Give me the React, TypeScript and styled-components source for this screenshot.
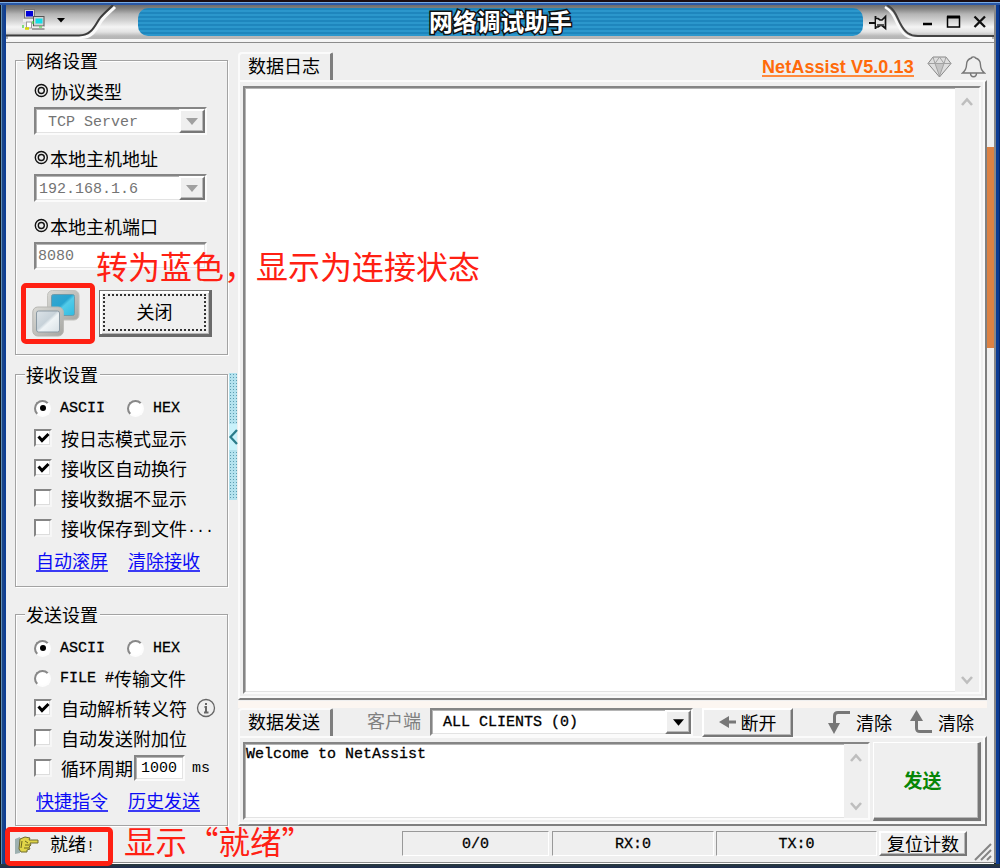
import React from "react";
import styled, { createGlobalStyle, css } from "styled-components";

const cjk = `"Noto Sans CJK SC", "Noto Sans", sans-serif`;
const mono = `"Liberation Mono", "Noto Sans CJK SC", monospace`;

const Global = createGlobalStyle`
  * { box-sizing: border-box; }
  body { margin: 0; font-family: ${cjk}; font-size: 18px; line-height: 20px; color: #000; white-space: nowrap; }
  svg { display: block; flex: none; }
  button, input { font: inherit; color: inherit; border-radius: 0; margin: 0; }
`;

const Frame = styled.div`
  position: relative;
  width: 1000px;
  height: 868px;
  padding: 5px 4px 5px 6px;
  display: flex;
  flex-direction: column;
  overflow: hidden;
  background:
    linear-gradient(#1a0c10 0 2px, #79abe4 2px 3px, #2a57a4 3px 5px, transparent 5px) 0 0 / 100% 100%,
    linear-gradient(#2b3b3b, #1d2c50) 0 100% / 100% 4px no-repeat,
    linear-gradient(90deg, #101418 0 1px, #5e8fb8 1px 2px, #1b4488 2px 4px, #0f3f94 4px 6px, transparent 6px calc(100% - 6px), #14202c calc(100% - 6px) calc(100% - 4px), #0c3c94 calc(100% - 4px) calc(100% - 1px), #07276a calc(100% - 1px));
`;

const Shell = styled.div`
  flex: 1;
  display: flex;
  flex-direction: column;
  background: #efefef;
  border-right: 2px solid #87888a;
`;

const TitleBar = styled.header`
  height: 38px;
  display: grid;
  grid-template-columns: 132px 725px 1fr;
  background: linear-gradient(#6c6b6b 0, #858585 4px, #b4b4b4 9px, #cfcfcf 15px, #f4f4f4 22px, #e2e2e2 27px, #b9b9b9 31px, #b5b5b5 34px, #f7f7f7 34px, #f4f4f4 37px, #8c8c8c 37px);
`;

const TitlePill = styled.h1`
  margin: 3px 0 0;
  height: 28px;
  padding-bottom: 3px;
  border-radius: 10px;
  display: flex;
  align-items: center;
  justify-content: center;
  font-size: 23.8px;
  font-weight: 700;
  color: #fff;
  -webkit-text-stroke: 3px #111;
  paint-order: stroke fill;
  background: repeating-linear-gradient(#1e86bd 0 2px, #2b97cc 2px 4px);
`;

const Main = styled.main`
  height: 785px;
  display: flex;
`;

const Sidebar = styled.aside`
  width: 222px;
  padding: 17px 0 0 9px;
`;

const Group = styled.section<{ $h: number; $gap?: number }>`
  height: ${(p) => p.$h}px;
  margin-top: ${(p) => p.$gap ?? 0}px;
  padding-left: 18px;
  border: 1px solid #a3a3a3;
  box-shadow: 1px 1px 0 #fff, inset 1px 1px 0 #fff;
`;

const Legend = styled.h2`
  width: 75px;
  height: 20px;
  margin: -10px 0 0 -9px;
  padding-left: 1px;
  background: #efefef;
  font-size: 18px;
  line-height: 18px;
  font-weight: 400;
`;

const Label = styled.div<{ $mt: number }>`
  margin-top: ${(p) => p.$mt}px;
  height: 20px;
  line-height: 18px;
  display: flex;
  gap: 1px;
`;

const sunken = css`
  background: #fff;
  border: 2px solid;
  border-color: #858585 #fbfbfb #fbfbfb #858585;
  box-shadow: inset 1px 1px 0 #b5b5b5, inset -1px -1px 0 #e3e3e3;
`;

const raised = css`
  background: #efefef;
  border: 2px solid;
  border-color: #fff #777 #777 #fff;
  box-shadow: inset -1px -1px 0 #b8b8b8;
`;

const Combo = styled.div<{ $w: number; $pad: number; $live?: boolean }>`
  ${sunken}
  width: ${(p) => p.$w}px;
  height: 28px;
  margin-top: 5px;
  padding-left: ${(p) => p.$pad}px;
  display: flex;
  justify-content: space-between;
  font: 15px/27px ${mono};
  color: ${(p) => (p.$live ? "#000" : "#747474")};
`;

const DropButton = styled.span`
  ${raised}
  width: 26px;
  height: 24px;
  display: grid;
  place-items: center;
`;

const PortField = styled.input`
  ${sunken}
  width: 173px;
  height: 28px;
  margin-top: 5px;
  padding: 0 2px;
  display: block;
  font: 15px/20px ${mono};
  color: #747474;
  outline: none;
`;

const ConnectRow = styled.div`
  display: flex;
  align-items: center;
  margin: 19px 0 0 -2px;
  height: 48px;
`;

const ConnectButton = styled.button`
  ${raised}
  width: 113px;
  height: 47px;
  margin-left: 18px;
  padding: 3px;
  border-color: #777 #6a6a6a #6a6a6a #777;
  border-width: 1px 3px 3px 1px;
  box-shadow: inset 2px 2px 0 #fff, inset -1px -1px 0 #b8b8b8;
  & > span {
    height: 100%;
    display: grid;
    place-items: center;
    border: 2px dotted #333;
    padding-bottom: 2px;
  }
`;

const Options = styled.div`
  padding-top: 8px;
`;

const OptionRow = styled.div`
  height: 30px;
  display: flex;
  align-items: center;
`;

const Latin = styled.span<{ $bold?: boolean; $drop?: number }>`
  font: 15px/20px ${mono};
  padding-top: ${(p) => p.$drop ?? 2}px;
  ${(p) => p.$bold && "-webkit-text-stroke: 0.3px currentColor;"}
`;

const CheckBox = styled.span`
  width: 18px;
  height: 18px;
  margin-right: 9px;
  display: grid;
  place-items: center;
  background: #fff;
  border: 2px solid;
  border-color: #858585 #f6f6f6 #f6f6f6 #858585;
  box-shadow: inset -1px -1px 0 #ddd;
`;

const RadioDot = styled.span<{ $on?: boolean; $ml?: number }>`
  width: 17px;
  height: 17px;
  margin: 0 9px 0 ${(p) => p.$ml ?? 0}px;
  border-radius: 50%;
  display: grid;
  place-items: center;
  border: 2px solid;
  border-color: #888 #fdfdfd #fdfdfd #888;
  background: #fff;
  &::after {
    content: "";
    width: 6px;
    height: 6px;
    border-radius: 50%;
    background: ${(p) => (p.$on ? "#000" : "transparent")};
  }
`;

const PeriodField = styled.input`
  ${sunken}
  width: 51px;
  height: 26px;
  padding: 1px 0 0 5px;
  margin: 0 7px 0 1px;
  font: 15px/20px ${mono};
  outline: none;
`;

const Links = styled.nav`
  margin: 7px 0 0 2px;
  display: flex;
  gap: 20px;
`;

const Link = styled.a`
  height: 22px;
  line-height: 21px;
  color: #0b0bf5;
  border-bottom: 2px solid #3a3af5;
`;

const Splitter = styled.div`
  width: 10px;
  padding: 330px 0 0 1px;
`;

const Grip = styled.div`
  height: 127px;
  width: 8px;
  padding-top: 51px;
  background: radial-gradient(circle, #5c9cb0 0.7px, transparent 1px) 0 0 / 3px 3px, #b4e2ee;
  & > div {
    height: 26px;
    display: grid;
    place-items: center;
    background: #c9f2fb;
  }
`;

const Content = styled.div`
  width: 749px;
  padding-top: 9px;
`;

const TabRow = styled.div`
  height: 28px;
  display: flex;
  align-items: center;
`;

const Tab = styled.div`
  width: 95px;
  height: 28px;
  align-self: flex-start;
  padding: 1px 0 0 8px;
  border: solid;
  border-width: 2px 3px 0 2px;
  border-color: #fbfbfb #7e7e7e #fbfbfb #fbfbfb;
  border-radius: 4px 2px 0 0;
`;

const VersionLink = styled.a`
  margin: 2px 0 0 429px;
  height: 19px;
  font: 700 18px/18px "Liberation Sans", sans-serif;
  letter-spacing: 0.1px;
  color: #ff6a0a;
  border-bottom: 2px solid #ff8a3c;
`;

const IconPair = styled.div`
  display: flex;
  gap: 9px;
  margin: 2px 0 0 13px;
`;

const Panel = styled.div<{ $h: number }>`
  height: ${(p) => p.$h}px;
  display: flex;
  gap: 3px;
  padding: 4px 4px 4px 3px;
  border: 2px solid;
  border-color: #fbfbfb #808080 #808080 #fbfbfb;
  box-shadow: inset -2px -2px 0 #fafafa;
`;

const TextArea = styled.div<{ $w: number }>`
  ${sunken}
  width: ${(p) => p.$w}px;
  display: flex;
  justify-content: space-between;
`;

const Message = styled.div`
  padding-left: 1px;
  line-height: 20px;
  display: flex;
  align-items: flex-start;
`;

const ScrollTrack = styled.div`
  width: 24px;
  padding: 9px 0 7px;
  display: flex;
  flex-direction: column;
  align-items: center;
  justify-content: space-between;
  background: #efefef;
`;

const SendRow = styled.div`
  margin-top: 1px;
  border-top: 7px solid #fcf6f1;
  height: 35px;
  display: flex;
`;

const ClientLabel = styled.span`
  margin: 2px 9px 0 34px;
  color: #808080;
`;

const SendCombo = styled(Combo)`
  margin-top: 0;
`;

const FlatButton = styled.button<{ $w: number; $h: number; $ml?: number }>`
  ${raised}
  width: ${(p) => p.$w}px;
  height: ${(p) => p.$h}px;
  margin-left: ${(p) => p.$ml ?? 0}px;
  padding: 0 0 2px;
  display: flex;
  align-items: center;
  justify-content: center;
  gap: 5px;
`;

const ClearAction = styled.span<{ $ml: number }>`
  margin: 1px 0 0 ${(p) => p.$ml}px;
  height: 26px;
  display: flex;
  align-items: center;
  gap: 5px;
  & > span { padding-bottom: 1px; }
`;

const SendButton = styled.button`
  ${raised}
  width: 108px;
  height: 79px;
  padding: 0 7px 2px 0;
  border-width: 1px 3px 3px 1px;
  font-size: 19px;
  font-weight: 700;
  color: #078607;
`;

const StatusBar = styled.footer`
  height: 35px;
  padding: 3px 0 0 9px;
  display: flex;
  align-items: flex-start;
  border-bottom: 1px solid #8c8c8c;
`;

const Ready = styled.div`
  width: 387px;
  height: 28px;
  display: flex;
  align-items: center;
  gap: 11px;
`;

const StatusCell = styled.div<{ $w: number; $gap: number }>`
  width: ${(p) => p.$w}px;
  height: 25px;
  margin-right: ${(p) => p.$gap}px;
  display: grid;
  place-items: center;
  border: 1px solid;
  border-color: #999 #fff #fff #999;
`;

const Highlight = styled.div<{ $x: number; $y: number; $w: number; $h: number }>`
  position: absolute;
  left: ${(p) => p.$x}px;
  top: ${(p) => p.$y}px;
  width: ${(p) => p.$w}px;
  height: ${(p) => p.$h}px;
  border: 5px solid #ff2013;
  border-radius: 5px;
`;

const Note = styled.div<{ $x: number; $y: number; $size: number }>`
  position: absolute;
  left: ${(p) => p.$x}px;
  top: ${(p) => p.$y}px;
  font: 400 ${(p) => p.$size}px/30px "Noto Sans CJK SC", sans-serif;
  color: #ff2013;
`;

const EdgeMarker = styled.div`
  position: absolute;
  left: 987px;
  top: 147px;
  width: 7px;
  height: 201px;
  background: #dc8244;
`;

const InfoIcon = styled.svg`
  margin-left: 9px;
`;

const SizeGrip = styled.svg`
  margin: 11px 0 0 7px;
`;

const Triangle = ({ color = "#a0a0a0", w = 12 }: { color?: string; w?: number }) => (
  <svg width={w} height="7" viewBox="0 0 12 7"><path d="M0 0H12L6 7Z" fill={color} /></svg>
);

const Chevron = ({ down }: { down?: boolean }) => (
  <svg width="12" height="10" viewBox="0 0 12 10">
    <path d={down ? "M1 2L6 7.5L11 2" : "M1 8L6 2.5L11 8"} fill="none" stroke="#bebebe" strokeWidth="2.6" />
  </svg>
);

const Bullet = () => (
  <svg width="15" height="16" viewBox="0 0 15 16" fill="none" stroke="#111" strokeWidth="1.4">
    <circle cx="7.3" cy="8.5" r="6" /><circle cx="7.3" cy="8.5" r="3" />
  </svg>
);

const MenuArea = () => (
  <svg width="132" height="38" viewBox="0 0 132 38">
    <path d="M0 30.5H73C86 30.5 89 20 94 13C98 8 103 4 107 0" fill="none" stroke="#fafafa" strokeWidth="3" transform="translate(2 2)" />
    <path d="M0 30.5H73C86 30.5 89 20 94 13C98 8 103 4 107 0" fill="none" stroke="#3c3c3c" strokeWidth="2" />
    <rect x="18.500" y="4.500" width="10" height="8.500" fill="#dadada" stroke="#777" />
    <rect x="20" y="6" width="7" height="5.500" fill="#0000d8" />
    <path d="M17 15.500H27" stroke="#eee" strokeWidth="3" />
    <rect x="20.500" y="17" width="5" height="6" fill="#fff" stroke="#999" />
    <rect x="27.500" y="11.500" width="10.500" height="9.500" fill="#d2d2d2" stroke="#555" />
    <rect x="29.500" y="13.500" width="7" height="5" fill="#12dce8" />
    <path d="M26 22.500H38" stroke="#eee" strokeWidth="2" /><path d="M26 24H38.500" stroke="#555" />
    <path d="M19 23.500H23" stroke="#d8d800" strokeWidth="2.500" />
    <path d="M17 20V23M27 16V19M33 22H36" stroke="#35d335" strokeWidth="1.200" />
    <path d="M51 13H59L55 17.500Z" />
  </svg>
);

const WindowControls = () => (
  <svg width="131" height="38" viewBox="863 5 131 38">
    <path d="M887 5C895 10 896 15 900 23C905 33 910 36 918 36H994" transform="translate(-2 2)" fill="none" stroke="#fafafa" strokeWidth="2.500" />
    <path d="M887 5C895 10 896 15 900 23C905 33 910 36 918 36H994" fill="none" stroke="#444" strokeWidth="2" />
    <path d="M869 23H875" stroke="#111" strokeWidth="2" />
    <path d="M875.500 16V29" stroke="#111" strokeWidth="1.800" />
    <path d="M876 18.500H878L880 20H882L885.500 16.500V28.500L882 25.500H880L878 27H876" fill="#e4e4e4" stroke="#111" strokeWidth="1.700" />
    <path d="M877 25H884" stroke="#444" strokeWidth="1.800" />
    <path d="M923 24H932" stroke="#000" strokeWidth="2.500" />
    <path d="M947.500 17V27H959.500V17Z" fill="none" stroke="#000" strokeWidth="1.500" /><path d="M947 17H960" stroke="#000" strokeWidth="3" />
    <path d="M974.500 16.500L985 27M985 16.500L974.500 27" stroke="#111" strokeWidth="2.300" />
  </svg>
);

const Screens = () => (
  <svg width="49" height="48" viewBox="0 0 49 48">
    <defs>
      <linearGradient id="rim" x1="0" y1="0" x2="1" y2="1"><stop offset="0" stopColor="#dadad6" /><stop offset="1" stopColor="#a6a6a2" /></linearGradient>
      <linearGradient id="blue" x1="0" y1="0" x2="1" y2="1"><stop offset="0" stopColor="#3ba6cf" /><stop offset=".45" stopColor="#27a4d0" /><stop offset=".55" stopColor="#53cbe8" /><stop offset="1" stopColor="#2ebbe2" /></linearGradient>
      <linearGradient id="pale" x1="0" y1="0" x2="1" y2="1"><stop offset="0" stopColor="#dce3e8" /><stop offset=".45" stopColor="#c7d2d9" /><stop offset=".55" stopColor="#eff4f6" /><stop offset="1" stopColor="#d7e0e5" /></linearGradient>
    </defs>
    <rect x="15.500" y="1.500" width="31.500" height="29.500" rx="5" fill="url(#rim)" stroke="#c2c2be" />
    <rect x="19.500" y="5.500" width="23" height="21" rx="2" fill="url(#blue)" stroke="#6e9cab" />
    <rect x=".8" y="18" width="30.500" height="29" rx="5" fill="url(#rim)" stroke="#b6b6b2" />
    <rect x="4.500" y="22" width="23" height="21" rx="2" fill="url(#pale)" stroke="#8b9aa4" />
  </svg>
);

const Check = () => (
  <svg width="13" height="12" viewBox="0 0 13 12"><path d="M1.500 4.500L5 8.500L11.500 2" fill="none" stroke="#000" strokeWidth="3" /></svg>
);

const Hand = () => (
  <svg width="24" height="19" viewBox="0 0 24 19">
    <path d="M0 3L5 1V17L0 18Z" fill="#9db0b0" />
    <path d="M5 3L10 1L15 2L14 4H23V7H15L16 9L14 11L15 13L12 14V16H6L4 13Z" fill="#e0d548" stroke="#6e6a30" />
    <path d="M10 5L13 7M10 9H15M9 12H14M7 5L6 12" stroke="#6b651f" fill="none" />
  </svg>
);

const Gem = () => (
  <svg width="25" height="22" viewBox="0 0 25 22" fill="none" stroke="#888" strokeWidth="1">
    <path d="M6 1H19L24 7.500L12.500 21L1 7.500Z" fill="#dedede" />
    <path d="M8 7.500H17L12.500 20Z" fill="#c4c4c4" stroke="none" />
    <path d="M1 7.500H24M6 1L8 7.500L12.500 1L17 7.500L19 1M8 7.500L12.500 20L17 7.500" stroke="#a2a2a2" />
  </svg>
);

const Bell = () => (
  <svg width="25" height="22" viewBox="0 0 25 22" fill="none" stroke="#777" strokeWidth="1.400">
    <path d="M10.500 2C10.500 .5 14.500 .5 14.500 2C18 3 19.500 5.500 19.500 9C19.500 13 20.500 14.500 23.500 17H1.500C4.500 14.500 5.500 13 5.500 9C5.500 5.500 7 3 10.500 2Z" />
    <path d="M9.500 17C9.500 22 15.500 22 15.500 17" />
  </svg>
);

const Turn = ({ up }: { up?: boolean }) => (
  <svg width="24" height="24" viewBox="0 0 24 24">
    <path d={up ? "M7.500 8V18C7.500 21 8.500 21.500 11 21.500H23" : "M23 2.500H11C8.500 2.500 7.500 3.500 7.500 6V15"} fill="none" stroke="#777" strokeWidth="3" />
    <path d={up ? "M1 11L7.500 0L14 11Z" : "M1 13L7 24L13 13Z"} fill="#777" />
  </svg>
);

const Checked = ({ on, children }: { on?: boolean; children: React.ReactNode }) => (
  <OptionRow><CheckBox>{on && <Check />}</CheckBox>{children}</OptionRow>
);

const FormatRow = () => (
  <OptionRow>
    <RadioDot $on /><Latin $bold>ASCII</Latin>
    <RadioDot $ml={22} /><Latin $bold>HEX</Latin>
  </OptionRow>
);

const Scroll = () => <ScrollTrack><Chevron /><Chevron down /></ScrollTrack>;

export default function App() {
  return (
    <Frame>
      <Global />
      <Shell>
        <TitleBar>
          <MenuArea />
          <TitlePill>网络调试助手</TitlePill>
          <WindowControls />
        </TitleBar>
        <Main>
          <Sidebar>
            <Group $h={295}>
              <Legend>网络设置</Legend>
              <Label $mt={11}><Bullet />协议类型</Label>
              <Combo $w={173} $pad={12}>TCP Server<DropButton><Triangle /></DropButton></Combo>
              <Label $mt={14}><Bullet />本地主机地址</Label>
              <Combo $w={173} $pad={3}>192.168.1.6<DropButton><Triangle /></DropButton></Combo>
              <Label $mt={15}><Bullet />本地主机端口</Label>
              <PortField defaultValue="8080" />
              <ConnectRow><Screens /><ConnectButton><span>关闭</span></ConnectButton></ConnectRow>
            </Group>
            <Group $h={213} $gap={19}>
              <Legend>接收设置</Legend>
              <Options>
                <FormatRow />
                <Checked on>按日志模式显示</Checked>
                <Checked on>接收区自动换行</Checked>
                <Checked>接收数据不显示</Checked>
                <Checked>接收保存到文件<Latin>...</Latin></Checked>
              </Options>
              <Links><Link>自动滚屏</Link><Link>清除接收</Link></Links>
            </Group>
            <Group $h={212} $gap={27}>
              <Legend>发送设置</Legend>
              <Options>
                <FormatRow />
                <OptionRow><RadioDot /><Latin $bold>FILE #</Latin>传输文件</OptionRow>
                <Checked on>
                  自动解析转义符
                  <InfoIcon width="20" height="20" viewBox="0 0 20 20" fill="none" stroke="#666">
                    <circle cx="10" cy="10" r="8.500" strokeWidth="1.300" />
                    <path d="M10 5V7M8.500 9H10V14M8 14.500H12.500" strokeWidth="2" />
                  </InfoIcon>
                </Checked>
                <Checked>自动发送附加位</Checked>
                <Checked>循环周期<PeriodField defaultValue="1000" /><Latin>ms</Latin></Checked>
              </Options>
              <Links><Link>快捷指令</Link><Link>历史发送</Link></Links>
            </Group>
          </Sidebar>
          <Splitter>
            <Grip><div><svg width="9" height="16" viewBox="0 0 9 16"><path d="M8 1L1.500 8L8 15" fill="none" stroke="#2c7c8a" strokeWidth="2.300" /></svg></div></Grip>
          </Splitter>
          <Content>
            <TabRow>
              <Tab>数据日志</Tab>
              <VersionLink>NetAssist V5.0.13</VersionLink>
              <IconPair><Gem /><Bell /></IconPair>
            </TabRow>
            <Panel $h={620}><TextArea $w={738}><Message /><Scroll /></TextArea></Panel>
            <SendRow>
              <Tab>数据发送</Tab>
              <ClientLabel>客户端</ClientLabel>
              <SendCombo $w={263} $pad={11} $live>
                <Latin $bold $drop={3}>ALL CLIENTS (0)</Latin>
                <DropButton><Triangle color="#000" w={11} /></DropButton>
              </SendCombo>
              <FlatButton $w={91} $h={29} $ml={9}>
                <svg width="17" height="12" viewBox="0 0 17 12"><path d="M0 6L10 0V4.500H17V7.500H10V12Z" fill="#777" /></svg>
                断开
              </FlatButton>
              <ClearAction $ml={34}><Turn /><span>清除</span></ClearAction>
              <ClearAction $ml={17}><Turn up /><span>清除</span></ClearAction>
            </SendRow>
            <Panel $h={90}>
              <TextArea $w={627}><Message><Latin $bold $drop={1}>Welcome to NetAssist</Latin></Message><Scroll /></TextArea>
              <SendButton>发送</SendButton>
            </Panel>
          </Content>
        </Main>
        <StatusBar>
          <Ready><Hand /><span>就绪<Latin>!</Latin></span></Ready>
          <StatusCell $w={147} $gap={3}><Latin $bold>0/0</Latin></StatusCell>
          <StatusCell $w={162} $gap={2}><Latin $bold>RX:0</Latin></StatusCell>
          <StatusCell $w={161} $gap={2}><Latin $bold>TX:0</Latin></StatusCell>
          <FlatButton $w={88} $h={25}>复位计数</FlatButton>
          <SizeGrip width="18" height="19" viewBox="0 0 18 19">
            <path d="M1 18L17 2M7 18L17 8M13 18L17 14" stroke="#858585" strokeWidth="2" />
          </SizeGrip>
        </StatusBar>
      </Shell>
      <EdgeMarker />
      <Highlight $x={21} $y={283} $w={74} $h={61} />
      <Highlight $x={5} $y={827} $w={108} $h={39} />
      <Note $x={96} $y={250} $size={32}>转为蓝色，显示为连接状态</Note>
      <Note $x={124} $y={825} $size={31.5}>显示“就绪”</Note>
    </Frame>
  );
}
